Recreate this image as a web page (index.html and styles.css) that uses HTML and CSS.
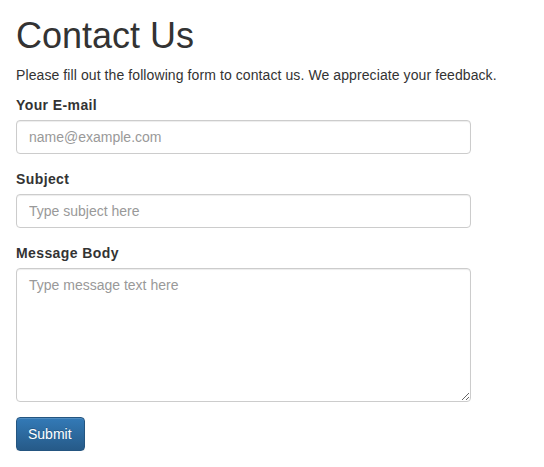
FILE: index.html
```html
<!DOCTYPE html>
<html lang="en">
<head>
<meta charset="utf-8">
<title>Contact Us</title>
<link rel="stylesheet" href="styles.css">
</head>
<body>
<div class="container">
  <h1 class="title">Contact Us</h1>
  <p class="intro">Please fill out the following form to contact us. We appreciate your feedback.</p>
  <form class="form">
    <div class="form-group">
      <label class="label" for="email">Your E-mail</label>
      <input class="control" id="email" type="email" placeholder="name@example.com">
    </div>
    <div class="form-group">
      <label class="label" for="subject">Subject</label>
      <input class="control" id="subject" type="text" placeholder="Type subject here">
    </div>
    <div class="form-group">
      <label class="label" for="body">Message Body</label>
      <textarea class="control area" id="body" placeholder="Type message text here"></textarea>
    </div>
    <button class="btn" type="submit">Submit</button>
  </form>
</div>
</body>
</html>
```
FILE: styles.css
```css
* { box-sizing: border-box; }
html, body { margin: 0; padding: 0; background: #fff; }
body {
  font-family: "Liberation Sans", Arial, Helvetica, sans-serif;
  font-size: 14px;
  line-height: 20px;
  color: #333;
}
.container { padding: 0 16px; }
.title {
  margin: 16px 0 9px;
  font-size: 36px;
  font-weight: 500;
  line-height: 1.1;
  color: #333;
}
.intro { margin: 0 0 10px; letter-spacing: 0.09px; }
.form { width: 455px; }
.form-group { margin-bottom: 15px; display: flex; flex-direction: column; }
.label { font-weight: bold; margin-bottom: 5px; display: block; letter-spacing: 0.4px; }
.control {
  display: block;
  width: 455px;
  height: 34px;
  padding: 6px 12px;
  font-family: inherit;
  font-size: 14px;
  line-height: 20px;
  color: #555;
  background: #fff;
  border: 1px solid #ccc;
  border-radius: 4px;
  box-shadow: inset 0 1px 1px rgba(0,0,0,.075);
  margin: 0;
}
.control::placeholder { color: #999; opacity: 1; }
.area { height: 134px; resize: vertical; }
.btn {
  display: inline-block;
  margin: 0;
  height: 34px;
  padding: 6px 12px 6px 11px;
  font-family: inherit;
  font-size: 14px;
  line-height: 20px;
  color: #fff;
  text-shadow: 0 -1px 0 rgba(0,0,0,.2);
  background: linear-gradient(to bottom, #337ab7 0, #265a88 100%);
  border: 1px solid #245580;
  border-radius: 4px;
  box-shadow: inset 0 1px 0 rgba(255,255,255,.15), 0 1px 1px rgba(0,0,0,.075);
  cursor: pointer;
}
```
